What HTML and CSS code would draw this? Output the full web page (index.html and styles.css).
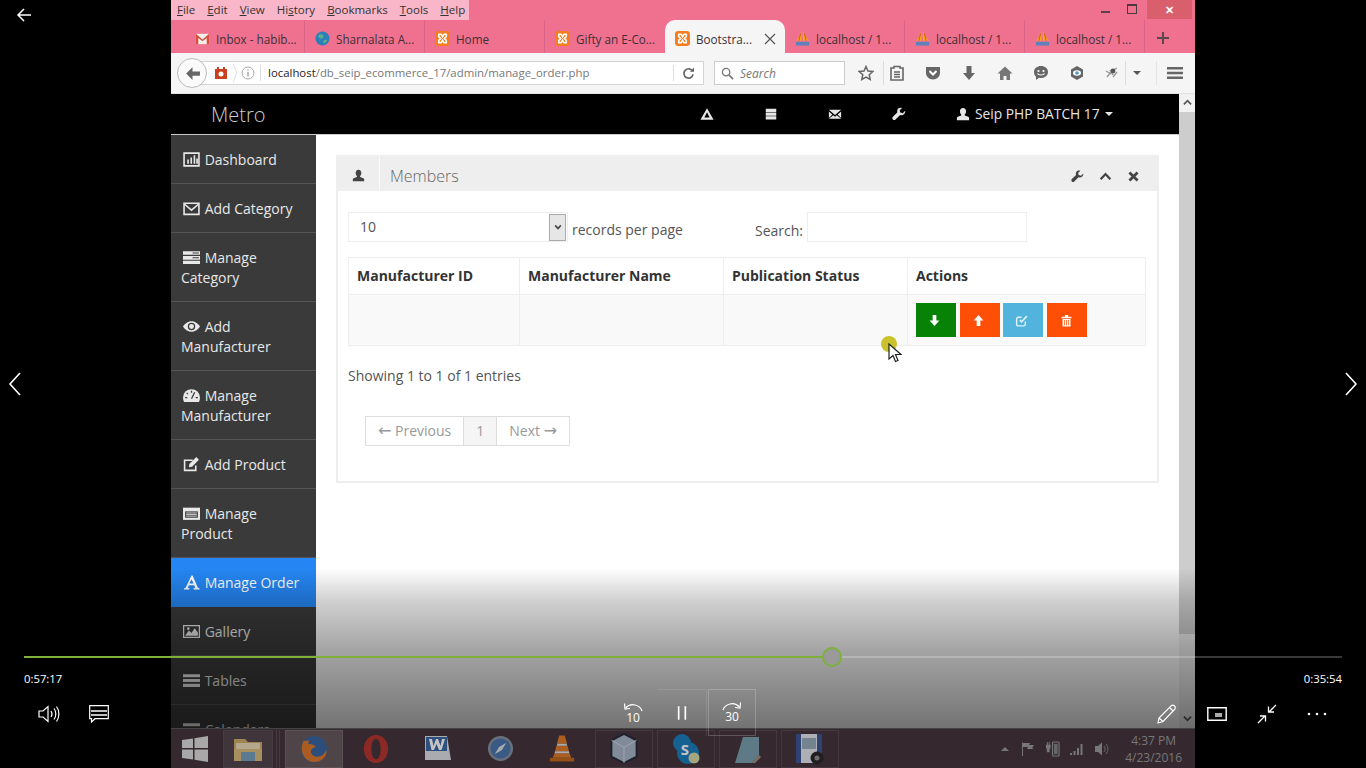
FILE: index.html
```html
<!DOCTYPE html>
<html lang="en">

<head>
    <meta charset="UTF-8">
    <title>Manage Order - Metro</title>
    <link rel="stylesheet" href="styles.css">
</head>

<body>
    <svg class="defs" width="0" height="0">
        <symbol id="xampp" viewBox="0 0 16 16">
            <rect x="0" y="0" width="16" height="16" rx="3.500" fill="#f57c1f" />
            <path d="M4 3.500h2.500L8 6l1.500-2.500H12V6l-2 2 2 2v2.500H9.500L8 10l-1.500 2.500H4V10l2-2-2-2z" fill="none" stroke="#fff" stroke-width="1.700" />
        </symbol>
        <symbol id="pma" viewBox="0 0 16 16">
            <path d="M1.500 10.500 7 .5v10zM8.500.5l6 10h-6z" fill="#f4a31c" />
            <path d="M6 2.500 4 10.500M10 2.500l2 8" stroke="#c9571a" stroke-width="1" />
            <rect x="1" y="11.500" width="14" height="4" fill="#5f82bd" />
        </symbol>
        <symbol id="wrench" viewBox="0 0 16 16">
            <path d="M15 4.200 12.300 7 9.500 6.300 8.800 3.600 11.500 1C9.400.3 7 1 6.200 3c-.4 1-.4 2 0 3L1 11.200c-.8.8-.8 2.200 0 3 .8.900 2.200.900 3 0L9.300 9c1 .4 2 .4 3 0 2-.8 3.200-3 2.700-4.800z" fill="currentColor" />
        </symbol>
        <symbol id="user" viewBox="0 0 16 16">
            <path d="M8 1c2.300 0 3.500 1.700 3.500 3.800 0 1.500-.7 3-1.500 3.800v1.200c2 .6 5 1.500 5 2.700V15H1v-2.500c0-1.200 3-2.100 5-2.700V8.600C5.200 7.800 4.500 6.300 4.500 4.800 4.500 2.700 5.700 1 8 1z" fill="currentColor" />
        </symbol>
        <symbol id="list" viewBox="0 0 16 16">
            <path d="M0 2h16v3H0zM0 6.500h16v3H0zM0 11h16v3H0z" fill="currentColor" />
        </symbol>
    </svg>

    <div class="screen">
        <div class="menubar">
            <nav class="menus">
                <span><u>F</u>ile</span>
                <span><u>E</u>dit</span>
                <span><u>V</u>iew</span>
                <span>Hi<u>s</u>tory</span>
                <span><u>B</u>ookmarks</span>
                <span><u>T</u>ools</span>
                <span><u>H</u>elp</span>
            </nav>
            <div class="window-btns">
                <span class="win-min"></span>
                <span class="win-restore"></span>
                <span class="win-close">&#10005;</span>
            </div>
        </div>

        <div class="tabs">
            <div class="tab">
                <svg class="fav" viewBox="0 0 16 16">
                    <path d="M1 3h14v11H1z" fill="#f3f0ec" />
                    <path d="M1 3l7 6 7-6v11h-2.500V7.500L8 11 3.500 7.500V14H1z" fill="#d9503f" />
                </svg>
                <span>Inbox - habib...</span>
            </div>
            <div class="tab">
                <svg class="fav" viewBox="0 0 16 16">
                    <circle cx="8" cy="8" r="7.500" fill="#2c7fb8" />
                    <path d="M4 4c2-1 4 0 5 1S8 8 6 8 3 6 4 4zM9 10c1-1 3-1 4 0-1 2-3 3-4 3z" fill="#5fae8b" />
                </svg>
                <span>Sharnalata A...</span>
            </div>
            <div class="tab">
                <svg class="fav">
                    <use href="#xampp" />
                </svg>
                <span>Home</span>
            </div>
            <div class="tab">
                <svg class="fav">
                    <use href="#xampp" />
                </svg>
                <span>Gifty an E-Co...</span>
            </div>
            <div class="tab tab-active">
                <svg class="fav">
                    <use href="#xampp" />
                </svg>
                <span>Bootstra...</span>
                <svg class="tab-close" viewBox="0 0 12 12">
                    <path d="M1 1l10 10M11 1 1 11" stroke="#555" stroke-width="1.200" />
                </svg>
            </div>
            <div class="tab">
                <svg class="fav">
                    <use href="#pma" />
                </svg>
                <span>localhost / 1...</span>
            </div>
            <div class="tab">
                <svg class="fav">
                    <use href="#pma" />
                </svg>
                <span>localhost / 1...</span>
            </div>
            <div class="tab">
                <svg class="fav">
                    <use href="#pma" />
                </svg>
                <span>localhost / 1...</span>
            </div>
            <svg class="tab-new" viewBox="0 0 14 14">
                <path d="M7 1v12M1 7h12" stroke="#5a4a50" stroke-width="2" />
            </svg>
        </div>

        <div class="toolbar">
            <div class="urlbar">
                <div class="back-btn">
                    <svg viewBox="0 0 16 16" width="17" height="17">
                        <path d="M8 2 2 8l6 6V10h7V6H8z" fill="#666" />
                    </svg>
                </div>
                <svg class="url-cam" viewBox="0 0 14 14">
                    <path d="M1 3h2V1h2v2h4V1h2v2h2v10H1z" fill="#c8401e" />
                    <circle cx="7" cy="8" r="2.500" fill="#fff" />
                </svg>
                <svg class="url-chevron" viewBox="0 0 6 24">
                    <path d="M1 2l4 10-4 10" fill="none" stroke="#ddd" />
                </svg>
                <svg class="url-info" viewBox="0 0 14 14">
                    <circle cx="7" cy="7" r="6" fill="none" stroke="#aaa" />
                    <path d="M7 6v4.500M7 3.500v1.200" stroke="#999" stroke-width="1.300" />
                </svg>
                <div class="url-text"><b>localhost</b>/db_seip_ecommerce_17/admin/manage_order.php</div>
                <div class="url-reload">
                    <svg viewBox="0 0 14 14" width="13" height="13">
                        <path d="M11.500 4.500A5 5 0 1 0 12 8" fill="none" stroke="#666" stroke-width="1.800" />
                        <path d="M8.500 5H13V.5z" fill="#666" />
                    </svg>
                </div>
            </div>
            <div class="searchbar">
                <svg viewBox="0 0 14 14" width="13" height="13">
                    <circle cx="5.500" cy="5.500" r="4" fill="none" stroke="#777" stroke-width="1.400" />
                    <path d="M8.500 8.500 13 13" stroke="#777" stroke-width="1.800" />
                </svg>
                <span>Search</span>
            </div>
            <div class="tool tool-star">
                <svg viewBox="0 0 16 16">
                    <path d="M8 1.500 10 6l4.800.5-3.600 3.200 1 4.800L8 12l-4.200 2.500 1-4.800L1.200 6.500 6 6z" fill="none" stroke="#666" stroke-width="1.500" />
                </svg>
            </div>
            <div class="tool tool-clip">
                <svg viewBox="0 0 16 16">
                    <path d="M2 3h3V1.500h6V3h3v12H2zM5 7h6M5 9.500h6M5 12h6" fill="none" stroke="#666" stroke-width="1.600" />
                </svg>
            </div>
            <div class="tool">
                <svg viewBox="0 0 16 16">
                    <path d="M1 2h14v6c0 3.500-3 6.500-7 6.500S1 11.500 1 8z" fill="#666" />
                    <path d="M4.500 6 8 9.500 11.500 6" fill="none" stroke="#fff" stroke-width="2" />
                </svg>
            </div>
            <div class="tool">
                <svg viewBox="0 0 16 16">
                    <path d="M5.500 1h5v7H14l-6 7-6-7h3.500z" fill="#666" />
                </svg>
            </div>
            <div class="tool">
                <svg viewBox="0 0 16 16">
                    <path d="M8 1.500 15.500 8.500H13V15H9.500v-4h-3v4H3V8.500H.5z" fill="#777" />
                </svg>
            </div>
            <div class="tool">
                <svg viewBox="0 0 16 16">
                    <path d="M8 1c4 0 7 2.500 7 6s-3 6-7 6c-.7 0-1.300-.1-2-.2L3 15v-3.200C1.800 10.700 1 9 1 7c0-3.500 3-6 7-6z" fill="#666" />
                    <circle cx="5.500" cy="6" r="1.100" fill="#fff" />
                    <circle cx="10.500" cy="6" r="1.100" fill="#fff" />
                    <path d="M4.500 8.500c1 2 6 2 7 0" fill="none" stroke="#fff" stroke-width="1.200" />
                </svg>
            </div>
            <div class="tool">
                <svg viewBox="0 0 16 16">
                    <path d="M8 1l6 3.500v7L8 15l-6-3.500v-7z" fill="#666" />
                    <ellipse cx="8" cy="8" rx="4" ry="2.700" fill="#fff" />
                    <circle cx="8" cy="8" r="1.800" fill="#4f9bd0" />
                </svg>
            </div>
            <div class="tool tool-addon">
                <svg viewBox="0 0 16 16">
                    <path d="M3 12 8 6l5-3M6 5l3 5M2 6l5 3M9 12l4-5" stroke="#999" stroke-width="1.400" fill="none" />
                    <circle cx="9" cy="6" r="2.400" fill="#555" />
                </svg>
            </div>
            <div class="tool tool-drop"><span></span></div>
            <div class="tool tool-menu">
                <svg viewBox="0 0 16 16">
                    <path d="M0 2h16v2.400H0zM0 6.800h16v2.400H0zM0 11.600h16V14H0z" fill="#666" />
                </svg>
            </div>
        </div>

        <div class="viewport">
            <div class="page">
                <header class="navbar">
                    <a class="brand">Metro</a>
                    <div class="nav-icons">
                        <svg viewBox="0 0 16 16">
                            <path d="M8 1.500 15.500 14.500H.5zM8 6 5 12h6z" fill="currentColor" fill-rule="evenodd" />
                        </svg>
                        <svg viewBox="0 0 16 16">
                            <path d="M2 2h12v3.600H2zM2 6.300h12v3.600H2zM2 10.600h12v3.600H2z" fill="currentColor" />
                        </svg>
                        <svg viewBox="0 0 16 16">
                            <path d="M1 3h14L8 9zM1 5l4 3.500L1 12.500zM15 5v7.500L11 8.500zM6 9.500l2 1.500 2-1.500 5 4H1z" fill="currentColor" />
                        </svg>
                        <svg viewBox="0 0 16 16">
                            <use href="#wrench" />
                        </svg>
                    </div>
                    <div class="nav-user">
                        <svg viewBox="0 0 16 16">
                            <use href="#user" />
                        </svg>
                        <span>Seip PHP BATCH 17</span>
                        <i class="caret"></i>
                    </div>
                </header>

                <div class="page-body">
                    <ul class="sidebar">
                        <li>
                            <svg class="side-icon" viewBox="0 0 16 16">
                                <path d="M1 2h14v12H1z" fill="none" stroke="currentColor" stroke-width="1.500" />
                                <path d="M4 8h1.500v4H4zM7 6h1.500v6H7zM10 4h1.500v8H10zM12.500 7H14v5h-1.500z" fill="currentColor" />
                            </svg>
                            Dashboard
                        </li>
                        <li>
                            <svg class="side-icon" viewBox="0 0 16 16">
                                <path d="M1 3h14v10.500H1z" fill="none" stroke="currentColor" stroke-width="1.500" />
                                <path d="M1.500 4 8 9.500 14.500 4" fill="none" stroke="currentColor" stroke-width="1.500" />
                            </svg>
                            Add Category
                        </li>
                        <li>
                            <svg class="side-icon" viewBox="0 0 16 16">
                                <path d="M0 2h16v3.500H0zM0 6.500h16V10H0zM0 11h16v3H0z" fill="currentColor" />
                                <path d="M9 3.800h6M9 8.200h6" stroke="#3a3a3a" stroke-width="1" />
                            </svg>
                            Manage Category
                        </li>
                        <li>
                            <svg class="side-icon" viewBox="0 0 16 16">
                                <path d="M8 3c3.500 0 6.500 2.500 8 5-1.500 2.500-4.500 5-8 5s-6.500-2.500-8-5c1.500-2.500 4.500-5 8-5zm0 1.500a3.500 3.500 0 1 0 0 7 3.500 3.500 0 0 0 0-7z" fill="currentColor" fill-rule="evenodd" />
                                <circle cx="8" cy="8" r="2.300" fill="currentColor" />
                            </svg>
                            Add Manufacturer
                        </li>
                        <li>
                            <svg class="side-icon" viewBox="0 0 16 16">
                                <path d="M8 2a8 8 0 0 1 8 8c0 1.500-.4 2.800-1 4H1c-.6-1.200-1-2.500-1-4a8 8 0 0 1 8-8z" fill="currentColor" />
                                <path d="M8 11 11 5M8 3.500v2M3.500 5.500l1.200 1.200M2 10h2M12 10h2" stroke="#3a3a3a" stroke-width="1.200" />
                            </svg>
                            Manage Manufacturer
                        </li>
                        <li>
                            <svg class="side-icon" viewBox="0 0 16 16">
                                <path d="M12 9v4.500H1.500V4H9" fill="none" stroke="currentColor" stroke-width="1.500" />
                                <path d="M6 7.500 12.500 1 15 3.500 8.500 10 5.500 10.500z" fill="currentColor" />
                            </svg>
                            Add Product
                        </li>
                        <li>
                            <svg class="side-icon" viewBox="0 0 16 16">
                                <path d="M0 2.500h16V14H0z" fill="currentColor" />
                                <path d="M2 6h12v6H2z" fill="#3a3a3a" />
                                <path d="M3 7.500h10M3 9h10M3 10.500h10" stroke="currentColor" stroke-width=".8" />
                            </svg>
                            Manage Product
                        </li>
                        <li class="active">
                            <svg class="side-icon" viewBox="0 0 16 16">
                                <path d="M8 1.500h1L14 13l1.500.5v1h-5.500v-1l1.500-.5-1-2.500H5.500l-1 2.500 1.500.5v1H1v-1L2.500 13zM8 5 6 9h4z" fill="currentColor" fill-rule="evenodd" />
                            </svg>
                            Manage Order
                        </li>
                        <li>
                            <svg class="side-icon" viewBox="0 0 16 16">
                                <path d="M.5 2.500h15v11H.5z" fill="none" stroke="currentColor" stroke-width="1.300" />
                                <path d="M2 12l3.500-5 2.500 2.500L11 5l3 4v3z" fill="currentColor" />
                                <circle cx="5" cy="5.300" r="1.200" fill="currentColor" />
                            </svg>
                            Gallery
                        </li>
                        <li>
                            <svg class="side-icon" viewBox="0 0 16 16">
                                <use href="#list" />
                            </svg>
                            Tables
                        </li>
                        <li>
                            <svg class="side-icon" viewBox="0 0 16 16">
                                <use href="#list" />
                            </svg>
                            Calendars
                        </li>
                    </ul>

                    <main class="content">
                        <section class="box">
                            <div class="box-header">
                                <span class="box-icon">
                                    <svg viewBox="0 0 16 16" width="13" height="13">
                                        <use href="#user" />
                                    </svg>
                                </span>
                                <h2>Members</h2>
                                <div class="box-tools">
                                    <svg viewBox="0 0 16 16">
                                        <use href="#wrench" />
                                    </svg>
                                    <svg viewBox="0 0 16 16">
                                        <path d="M2 11.500 8 5l6 6.500" fill="none" stroke="currentColor" stroke-width="2.800" />
                                    </svg>
                                    <svg viewBox="0 0 16 16">
                                        <path d="M3 3l10 10M13 3 3 13" stroke="currentColor" stroke-width="3.400" />
                                    </svg>
                                </div>
                            </div>
                            <div class="box-body">
                                <div class="table-controls">
                                    <div class="length-select">
                                        <span class="select-value">10</span>
                                        <span class="select-arrow">
                                            <svg viewBox="0 0 10 10" width="8" height="8">
                                                <path d="M1.500 3 5 7l3.500-4" fill="none" stroke="#444" stroke-width="2" />
                                            </svg>
                                        </span>
                                    </div>
                                    <span class="length-label">records per page</span>
                                    <label class="search-label">Search:</label>
                                    <div class="search-input"></div>
                                </div>
                                <table class="data-table">
                                    <thead>
                                        <tr>
                                            <th class="col-id">Manufacturer ID</th>
                                            <th class="col-name">Manufacturer Name</th>
                                            <th class="col-status">Publication Status</th>
                                            <th>Actions</th>
                                        </tr>
                                    </thead>
                                    <tbody>
                                        <tr>
                                            <td></td>
                                            <td></td>
                                            <td></td>
                                            <td class="actions">
                                                <a class="btn btn-green btn-nudge">
                                                    <svg viewBox="0 0 12 12">
                                                        <path d="M4.300 1h3.400v5H10.500L6 11 1.500 6h2.800z" fill="#fff" />
                                                    </svg>
                                                </a>
                                                <a class="btn btn-orange btn-nudge">
                                                    <svg viewBox="0 0 12 12">
                                                        <path d="M4.300 11h3.400V6H10.500L6 1 1.500 6h2.800z" fill="#fff" />
                                                    </svg>
                                                </a>
                                                <a class="btn btn-blue btn-nudge">
                                                    <svg viewBox="0 0 12 12">
                                                        <path d="M9.500 7v2.500a1.500 1.500 0 0 1-1.500 1.500H3A1.500 1.500 0 0 1 1.500 9.500V4.500A1.500 1.500 0 0 1 3 3h3" fill="none" stroke="#dff1fa" stroke-width="1.300" />
                                                        <path d="M4.500 5.500l1.500 1.700L11 2" fill="none" stroke="#dff1fa" stroke-width="1.500" />
                                                    </svg>
                                                </a>
                                                <a class="btn btn-orange">
                                                    <svg viewBox="0 0 12 12">
                                                        <path d="M1.500 2.500h3V1h3v1.500h3V4h-9zM2.300 4.700h7.400V11.500H2.300z" fill="#fff" />
                                                        <path d="M4.200 5.500v5M6 5.500v5M7.800 5.500v5" stroke="#ff4f06" stroke-width=".7" />
                                                    </svg>
                                                </a>
                                            </td>
                                        </tr>
                                    </tbody>
                                </table>
                                <div class="table-info">Showing 1 to 1 of 1 entries</div>
                                <ul class="pagination">
                                    <li class="page-prev"><span class="arrow">&larr;</span> Previous</li>
                                    <li class="page-current">1</li>
                                    <li class="page-next">Next <span class="arrow">&rarr;</span></li>
                                </ul>
                            </div>
                        </section>
                    </main>
                </div>
            </div>

            <div class="scrollbar">
                <svg viewBox="0 0 10 10" width="9" height="9">
                    <path d="M1 7 5 3l4 4" fill="none" stroke="#555" stroke-width="2" />
                </svg>
                <div class="scroll-thumb"></div>
                <svg viewBox="0 0 10 10" width="9" height="9">
                    <path d="M1 3l4 4 4-4" fill="none" stroke="#555" stroke-width="2" />
                </svg>
            </div>

            <div class="mouse">
                <span class="mouse-halo"></span>
                <svg viewBox="0 0 14 20" width="14" height="20">
                    <path d="M1 1v15l4-3.500 2.500 6 2.500-1-2.500-6H13z" fill="#fff" stroke="#222" stroke-width="1.200" />
                </svg>
            </div>

            <div class="scrim"></div>
        </div>

        <footer class="taskbar">
            <div class="task-start">
                <svg viewBox="0 0 26 26" width="26" height="26">
                    <path d="M0 4l11-1.500V12H0zM12.500 2.300 26 0v12H12.500zM0 13.500h11v10L0 22zM12.500 13.500H26V26l-13.500-2.300z" fill="#a8a8a8" />
                </svg>
            </div>
            <div class="task-item task-explorer">
                <svg viewBox="0 0 32 28" width="32" height="28">
                    <path d="M2 4h11l3 3h14v19H2z" fill="#c9a860" />
                    <path d="M4 8h24v6H4z" fill="#e4d9b0" />
                    <path d="M2 14h28v12H2z" fill="#d5b773" />
                    <path d="M9 17h14v9H9z" fill="#6b9ab5" />
                </svg>
            </div>
            <div class="task-item task-open">
                <svg viewBox="0 0 32 32" width="30" height="30">
                    <circle cx="16" cy="16" r="14" fill="#2a5c97" />
                    <path d="M5 7c-3 6-3 14 2 19 5 5 14 5 19 0 3-3 4-7 3-9-2 5-6 8-11 7-4-1-6-4-5-7 1-2 3-3 5-3-2-3-6-4-8-3 0-2 0-3 1-5-2 1-4 2-6 1z" fill="#d9701f" />
                </svg>
            </div>
            <div class="task-item">
                <svg viewBox="0 0 28 32" width="26" height="30">
                    <path d="M14 1C6 1 1 8 1 16s5 15 13 15 13-7 13-15S22 1 14 1zm0 4c3 0 5 5 5 11s-2 11-5 11-5-5-5-11S11 5 14 5z" fill="#b02a20" fill-rule="evenodd" />
                </svg>
            </div>
            <div class="task-item">
                <svg viewBox="0 0 28 28" width="28" height="28">
                    <path d="M1 1h22l4 24H1z" fill="#d8dde3" />
                    <path d="M2 2h21v14H2z" fill="#2a5f9e" />
                    <path d="M5 4h3l1.500 7L12 4h2l2.500 7L18 4h3l-3.500 11h-2.500L12.500 9 10 15H7.500z" fill="#fff" />
                </svg>
            </div>
            <div class="task-item">
                <svg viewBox="0 0 28 28" width="27" height="27">
                    <circle cx="14" cy="14" r="13" fill="#7f8c99" />
                    <circle cx="14" cy="14" r="10.500" fill="#3b6ea5" />
                    <path d="M20 8 15.500 15.500 8 20 12.500 12.500z" fill="#d5dde5" />
                </svg>
            </div>
            <div class="task-item">
                <svg viewBox="0 0 28 30" width="26" height="29">
                    <path d="M11 1h6l2.500 9h-11zM8 12h12l1.500 6h-15zM6 20h16l2 5H4z" fill="#d9731a" />
                    <path d="M9 10h10l.6 2H8.400zM6.500 18h15l.5 2H6z" fill="#ddd" />
                    <path d="M1 25h26v4H1z" fill="#b8600f" />
                </svg>
            </div>
            <div class="task-item task-box">
                <svg viewBox="0 0 28 32" width="28" height="31">
                    <path d="M14 1 27 7.500v17L14 31 1 24.500v-17z" fill="#9fb0c2" stroke="#141c2c" stroke-width="2" />
                    <path d="M14 15 27 7.500M14 15v16M14 15 1 7.500" stroke="#c8d3de" stroke-width="1" fill="none" />
                </svg>
            </div>
            <div class="task-item task-box">
                <svg viewBox="0 0 30 32" width="30" height="32">
                    <circle cx="11" cy="10" r="9" fill="#0a78b8" />
                    <circle cx="17" cy="20" r="11" fill="#0a78b8" />
                    <text x="14" y="22" class="skype-s">S</text>
                    <circle cx="23" cy="25" r="5.500" fill="#cfd6a0" />
                </svg>
            </div>
            <div class="task-item task-box">
                <svg viewBox="0 0 30 30" width="30" height="30">
                    <path d="M10 3h16v18l-7 8H2z" fill="#6e9aa8" />
                    <path d="M19 29l7-8 2 2-6 6z" fill="#9c8b73" />
                </svg>
            </div>
            <div class="task-item task-box">
                <svg viewBox="0 0 32 32" width="32" height="32">
                    <path d="M2 1h26v29H2z" fill="#dfe3ea" />
                    <path d="M2 1h5v29H2zM23 1h5v29h-5z" fill="#2c4d8f" />
                    <path d="M8 5h14v11H8z" fill="#8da7b5" />
                    <circle cx="23" cy="25" r="6.500" fill="#1a1a1a" />
                    <circle cx="23" cy="25" r="2.500" fill="#888" />
                </svg>
            </div>
            <div class="tray">
                <span class="tray-caret"></span>
                <svg viewBox="0 0 16 16" width="16" height="16">
                    <path d="M2 1.500h1V15H2zM3 2h7l-1 2h5l-2 3 2 1H7l1-2H3z" fill="#777" />
                </svg>
                <svg viewBox="0 0 16 18" width="15" height="17">
                    <path d="M1 5h1V2h1v3h1V2h1v3h1v4H5v4H2V9H1z" fill="#777" />
                    <rect x="8" y="2" width="7" height="15" rx="1" fill="none" stroke="#777" stroke-width="1.200" />
                    <rect x="9.500" y="4" width="4" height="11" fill="#666" />
                </svg>
                <svg viewBox="0 0 16 14" width="16" height="14">
                    <path d="M1 11h2v2H1zM4.500 9h2v4h-2zM8 6h2v7H8zM11.500 2h2v11h-2z" fill="#777" />
                </svg>
                <svg viewBox="0 0 16 16" width="16" height="16">
                    <path d="M1 5h3l4-3.500v13L4 11H1z" fill="#777" />
                    <path d="M10 5c1.500 1.500 1.500 4.500 0 6M12 3c2.500 2.500 2.500 7.500 0 10" fill="none" stroke="#666" stroke-width="1" />
                </svg>
                <div class="clock">
                    <div>4:37 PM</div>
                    <div>4/23/2016</div>
                </div>
            </div>
        </footer>
    </div>

    <!-- video player chrome, drawn over the recording -->
    <div class="player">
        <svg class="player-back" viewBox="0 0 16 16" width="16" height="16">
            <path d="M8 2 2 8l6 6M2 8h13" fill="none" stroke="#fff" stroke-width="1.500" />
        </svg>
        <div class="player-nav">
            <svg viewBox="0 0 14 26" width="14" height="26">
                <path d="M12 2 2 13l10 11" fill="none" stroke="#fff" stroke-width="1.600" />
            </svg>
            <svg viewBox="0 0 14 26" width="14" height="26">
                <path d="M2 2l10 11L2 24" fill="none" stroke="#fff" stroke-width="1.600" />
            </svg>
        </div>
        <div class="player-bottom">
            <div class="progress">
                <div class="progress-fill"></div>
                <div class="progress-knob"></div>
            </div>
            <div class="times">
                <span>0:57:17</span>
                <span>0:35:54</span>
            </div>
            <div class="controls">
                <div class="ctrl-group">
                    <div class="ctrl">
                        <svg viewBox="0 0 22 18" width="22" height="18">
                            <path d="M1 6h4l5-4.500v15L5 12H1z" fill="none" stroke="#fff" stroke-width="1.200" />
                            <path d="M13 6c1.200 1.800 1.200 4.200 0 6M16 3.500c2.400 3 2.400 8 0 11M18.500 1.500c3.200 4.200 3.200 10.800 0 15" fill="none" stroke="#fff" stroke-width="1.200" />
                        </svg>
                    </div>
                    <div class="ctrl">
                        <svg viewBox="0 0 20 18" width="20" height="18">
                            <path d="M.7.7h18.600v13H6L2.500 17v-3.300H.7z" fill="none" stroke="#fff" stroke-width="1.200" />
                            <path d="M2 6h16M2 10h16" stroke="#fff" stroke-width="1.300" />
                        </svg>
                    </div>
                </div>
                <div class="ctrl-group ctrl-center">
                    <div class="ctrl ctrl-skip">
                        <svg viewBox="0 0 20 10" width="20" height="10">
                            <path d="M19 9C17 3 8 0 2.500 6" fill="none" stroke="#fff" stroke-width="1.200" />
                            <path d="M1.500 1.500 2 7l5-.5" fill="none" stroke="#fff" stroke-width="1.200" />
                        </svg>
                        <span>10</span>
                    </div>
                    <div class="ctrl ctrl-pause">
                        <svg viewBox="0 0 12 16" width="10" height="16">
                            <path d="M2 0v16M10 0v16" stroke="#fff" stroke-width="2" />
                        </svg>
                    </div>
                    <div class="ctrl ctrl-skip ctrl-boxed">
                        <svg viewBox="0 0 20 10" width="20" height="10">
                            <path d="M1 9C3 3 12 0 17.500 6" fill="none" stroke="#fff" stroke-width="1.200" />
                            <path d="M18.500 1.500 18 7l-5-.5" fill="none" stroke="#fff" stroke-width="1.200" />
                        </svg>
                        <span>30</span>
                    </div>
                </div>
                <div class="ctrl-group ctrl-right">
                    <div class="ctrl">
                        <svg viewBox="0 0 20 20" width="20" height="20">
                            <path d="M1 19l1-5L14 2c1-1 2.500-1 3.500 0s1 2.500 0 3.500L6 17.500zM2 14l4 3.500M12.500 3.500l4 4" fill="none" stroke="#fff" stroke-width="1.200" />
                        </svg>
                    </div>
                    <div class="ctrl">
                        <svg viewBox="0 0 20 14" width="20" height="14">
                            <path d="M.8.8h18.400v12.400H.8z" fill="none" stroke="#fff" stroke-width="1.400" />
                            <path d="M8 6h7v4H8z" fill="#aaa" />
                        </svg>
                    </div>
                    <div class="ctrl">
                        <svg viewBox="0 0 20 20" width="20" height="20">
                            <path d="M1 19l7-7M3 12h5.500v5.500M19 1l-7 7M17 8h-5.500V2.500" fill="none" stroke="#fff" stroke-width="1.300" />
                        </svg>
                    </div>
                    <div class="ctrl">
                        <svg viewBox="0 0 20 4" width="20" height="4">
                            <circle cx="2" cy="2" r="1.300" fill="#fff" />
                            <circle cx="10" cy="2" r="1.300" fill="#fff" />
                            <circle cx="18" cy="2" r="1.300" fill="#fff" />
                        </svg>
                    </div>
                </div>
            </div>
        </div>
    </div>
</body>

</html>
```

FILE: styles.css
```css
* {
    box-sizing: border-box;
}

html,
body {
    height: 100%;
    margin: 0;
}

body {
    position: relative;
    display: flex;
    justify-content: center;
    overflow: hidden;
    background-color: #000;
    font-family: "Open Sans", Arial, sans-serif;
    color: #555;
}

.defs {
    position: absolute;
}

.screen {
    width: 1024px;
    height: 768px;
    display: flex;
    flex-direction: column;
    background-color: #f0718f;
}

/* browser chrome */
.menubar {
    height: 20px;
    display: flex;
    justify-content: space-between;
}

.menus {
    width: 298px;
    padding: 0 0 2px 6px;
    display: flex;
    gap: 12px;
    align-items: center;
    background-color: #f8b6c8;
    color: #333;
    font-size: 11.5px;
}

.window-btns {
    display: flex;
    align-items: flex-start;
    margin-right: 3px;
}

.win-min {
    width: 9px;
    height: 2px;
    margin: 11px 11px 0 0;
    background-color: #5a4248;
}

.win-restore {
    width: 10px;
    height: 10px;
    margin: 4px 10px 0 6px;
    border: 1px solid #4a3a40;
    border-top-width: 2px;
}

.win-close {
    width: 45px;
    height: 19px;
    background-color: #da5f6c;
    color: #fff;
    font-size: 11px;
    font-weight: bold;
    line-height: 19px;
    text-align: center;
}

.tabs {
    height: 33px;
    padding-left: 14px;
    display: flex;
    align-items: stretch;
}

.tab {
    width: 120px;
    padding: 4px 0 0 10px;
    display: flex;
    align-items: center;
    gap: 6px;
    border-right: 1px solid #d9668a;
    color: #3d3035;
    font-size: 11.700px;
    white-space: nowrap;
}

.tab:nth-child(4),
.tab-active {
    border-right: none;
}

.tab-active {
    background-color: #f5f5f5;
    border-radius: 10px 10px 0 0;
}

.fav {
    width: 15px;
    height: 15px;
    flex: none;
}

.tab-close {
    width: 12px;
    height: 12px;
    margin-left: 6px;
}

.tab-new {
    width: 14px;
    height: 14px;
    margin: 11px 0 0 11px;
}

.toolbar {
    height: 41px;
    display: flex;
    align-items: center;
    padding-left: 21px;
    background-color: #f5f5f5;
    border-bottom: 1px solid #e2e2e2;
}

.urlbar {
    position: relative;
    width: 512px;
    height: 24px;
    padding-left: 21px;
    display: flex;
    align-items: center;
    background-color: #fff;
    border: 1px solid #d5d5d5;
}

.back-btn {
    position: absolute;
    left: -16px;
    top: -4px;
    width: 30px;
    height: 30px;
    display: flex;
    align-items: center;
    justify-content: center;
    background-color: #fafafa;
    border: 1px solid #bbb;
    border-radius: 50%;
}

.url-cam {
    width: 14px;
    height: 14px;
}

.url-chevron {
    width: 6px;
    height: 22px;
    margin-left: 4px;
}

.url-info {
    width: 14px;
    height: 14px;
    margin-left: 3px;
}

.url-text {
    margin-left: 5px;
    padding-left: 7px;
    flex: 1;
    border-left: 1px solid #ddd;
    color: #777;
    font-size: 11.400px;
    line-height: 16px;
    white-space: nowrap;
}

.url-text b {
    color: #222;
    font-weight: normal;
}

.url-reload {
    width: 30px;
    height: 16px;
    display: flex;
    align-items: center;
    justify-content: center;
    border-left: 1px solid #ddd;
}

.searchbar {
    width: 131px;
    height: 24px;
    margin: 0 4px 0 10px;
    padding-left: 6px;
    display: flex;
    align-items: center;
    gap: 6px;
    background-color: #fff;
    border: 1px solid #ccc;
    color: #777;
    font-size: 12px;
    font-style: italic;
}

.tool {
    width: 36px;
    height: 24px;
    flex: none;
    display: flex;
    align-items: center;
    justify-content: center;
}

.tool svg {
    width: 16px;
    height: 16px;
}

.tool-star {
    border-right: 1px solid #ddd;
    width: 35px;
}

.tool-clip {
    width: 25px;
    margin-right: 6px;
}

.tool-addon {
    width: 34px;
}

.tool-drop {
    width: 22px;
    margin-left: -4px;
    border-left: 1px solid #ddd;
}

.tool-drop span {
    border: 4px solid transparent;
    border-top-color: #555;
    border-bottom: 0;
}

.tool-menu {
    width: 37px;
    margin-left: 9px;
    border-left: 1px solid #e4e4e4;
}

/* recorded page */
.viewport {
    position: relative;
    height: 634px;
    display: flex;
    overflow: hidden;
}

.page {
    flex: 1;
    display: flex;
    flex-direction: column;
    background-color: #fff;
}

.navbar {
    height: 41px;
    flex: none;
    display: flex;
    align-items: center;
    padding-bottom: 1px;
    background-color: #000;
    border-bottom: 1px solid #ccc;
    color: #e6e6e6;
}

.brand {
    margin-left: 40px;
    width: 489px;
    padding-top: 2px;
    color: #ccc;
    font-size: 20px;
    font-weight: 300;
}

.nav-icons {
    display: flex;
    gap: 50px;
}

.nav-icons svg {
    width: 14px;
    height: 14px;
}

.nav-user {
    margin-left: 50px;
    display: flex;
    align-items: center;
    gap: 5px;
    font-size: 13.800px;
}

.nav-user svg {
    width: 14px;
    height: 14px;
}

.caret {
    border: 4px solid transparent;
    border-top-color: #e6e6e6;
    border-bottom: 0;
}

.page-body {
    flex: 1;
    display: flex;
    min-height: 0;
}

.sidebar {
    width: 145px;
    flex: none;
    margin: 0;
    padding: 0;
    list-style: none;
    background-color: #3a3a3a;
    color: #e8e8e8;
    font-size: 14px;
    line-height: 20px;
}

.sidebar li {
    padding: 15px 10px 13px;
    border-bottom: 1px solid #555;
}

.sidebar li.active {
    background-color: #2586f3;
    border-bottom-color: #2586f3;
    color: #fff;
}

.side-icon {
    width: 17px;
    height: 17px;
    margin: 0 1px 0 2px;
    vertical-align: -3px;
}

.content {
    flex: 1;
    padding: 20px 20px 0;
}

.box {
    height: 328px;
    border: 2px solid #eee;
    border-top: none;
}

.box-header {
    height: 36px;
    display: flex;
    align-items: center;
    background-color: #eee;
    color: #444;
}

.box-icon {
    width: 42px;
    height: 36px;
    padding-top: 5px;
    display: flex;
    align-items: center;
    justify-content: center;
    border-right: 1px solid #fafafa;
}

.box-header h2 {
    margin: 0 0 0 10px;
    padding-top: 6px;
    flex: 1;
    color: #666;
    font-size: 16px;
    font-weight: 300;
}

.box-tools {
    display: flex;
    gap: 15px;
    margin: 6px 17px 0 0;
}

.box-tools svg {
    width: 13px;
    height: 13px;
}

.box-body {
    padding: 21px 10px 0;
}

.table-controls {
    height: 45px;
    display: flex;
    align-items: flex-start;
    font-size: 14px;
}

.length-select {
    width: 220px;
    height: 30px;
    display: flex;
    align-items: center;
    justify-content: space-between;
    padding: 0 1px 2px 11px;
    border: 1px solid #eee;
}

.select-value {
    color: #555;
}

.select-arrow {
    width: 17px;
    height: 27px;
    margin-top: 2px;
    display: flex;
    align-items: center;
    justify-content: center;
    background-color: #e6e6e6;
    border: 1px solid #aaa;
}

.length-label {
    margin: 8px 0 0 4px;
    width: 183px;
}

.search-label {
    margin-top: 9px;
    width: 52px;
}

.search-input {
    width: 220px;
    height: 30px;
    border: 1px solid #eee;
}

.data-table {
    width: 798px;
    border-collapse: collapse;
    table-layout: fixed;
    font-size: 14px;
}

.data-table th,
.data-table td {
    border: 1px solid #eee;
    padding: 0 8px;
}

.data-table th {
    height: 37px;
    padding-bottom: 2px;
    color: #333;
    font-weight: bold;
    text-align: left;
}

.data-table td {
    height: 51px;
    background-color: #f9f9f9;
}

.col-id {
    width: 171px;
}

.col-name {
    width: 204px;
}

.col-status {
    width: 184px;
}

.actions {
    white-space: nowrap;
}

.btn {
    width: 40px;
    height: 34px;
    display: inline-flex;
    align-items: center;
    justify-content: center;
    vertical-align: middle;
}

.btn svg {
    width: 13px;
    height: 13px;
}

.btn-nudge {
    padding-right: 3px;
}

.btn-green {
    background-color: #078207;
}

.btn-orange {
    background-color: #ff4f06;
}

.btn-blue {
    background-color: #52b3dc;
}

.table-info {
    margin-top: 20px;
    font-size: 14px;
    line-height: 20px;
}

.pagination {
    margin: 30px 0 0 17px;
    padding: 0;
    display: flex;
    list-style: none;
    color: #999;
    font-size: 14px;
}

.pagination li {
    height: 30px;
    padding: 0 12px;
    line-height: 28px;
    border: 1px solid #ddd;
    border-left: none;
}

.pagination .page-prev {
    border-left: 1px solid #ddd;
}

.pagination .page-current {
    background-color: #f5f5f5;
}

.arrow {
    font-family: "DejaVu Sans", sans-serif;
    font-size: 16px;
    line-height: 1;
}

.scrollbar {
    width: 16px;
    flex: none;
    display: flex;
    flex-direction: column;
    align-items: center;
    padding-top: 4px;
    background-color: #f1f1f1;
}

.scroll-thumb {
    width: 16px;
    height: 522px;
    margin-top: 5px;
    margin-bottom: 80px;
    background-color: #cdcdcd;
}

.mouse {
    position: absolute;
    left: 717px;
    top: 249px;
    width: 14px;
    height: 20px;
}

.mouse-halo {
    position: absolute;
    left: -7px;
    top: -7px;
    width: 16px;
    height: 16px;
    border-radius: 50%;
    background-color: #c9c22c;
}

.mouse svg {
    position: absolute;
    left: 0;
    top: 0;
}

.scrim {
    position: absolute;
    left: 0;
    right: 0;
    bottom: 0;
    height: 160px;
    background: linear-gradient(to bottom, rgba(0, 0, 0, 0) 0%, rgba(0, 0, 0, 0.18) 20%, rgba(0, 0, 0, 0.35) 50%, rgba(0, 0, 0, 0.55) 100%);
}

/* windows taskbar */
.taskbar {
    height: 40px;
    flex: none;
    display: flex;
    align-items: center;
    gap: 4px;
    background-color: #35292f;
    border-top: 1px solid #444;
}

.task-start {
    width: 48px;
    display: flex;
    justify-content: center;
}

.task-item {
    width: 58px;
    height: 38px;
    display: flex;
    align-items: center;
    justify-content: center;
    opacity: 0.72;
}

.task-explorer {
    width: 50px;
    margin-right: 8px;
    background-color: #453a40;
    border: 1px solid #4d4248;
    box-shadow: 3px 0 0 #35292f, 4px 0 0 #4d4248, 6px 0 0 #35292f, 7px 0 0 #4d4248;
}

.task-open {
    background-color: #5a5054;
    border: 1px solid #6c6266;
}

.task-box {
    border: 1px solid #4a3e44;
}

.skype-s {
    fill: #fff;
    font-size: 15px;
    font-weight: bold;
    text-anchor: middle;
}

.tray {
    margin-left: auto;
    padding-right: 13px;
    display: flex;
    align-items: center;
    gap: 9px;
}

.tray-caret {
    margin-right: 2px;
    border: 4px solid transparent;
    border-bottom-color: #777;
    border-top: 0;
}

.clock {
    margin-left: 6px;
    color: #777;
    font-size: 12px;
    line-height: 17px;
    text-align: center;
}

/* video player overlay */
.player {
    position: absolute;
    inset: 0;
    color: #fff;
}

.player-back {
    position: absolute;
    left: 16px;
    top: 7px;
}

.player-nav {
    position: absolute;
    left: 8px;
    right: 8px;
    top: 371px;
    display: flex;
    justify-content: space-between;
}

.player-bottom {
    position: absolute;
    left: 24px;
    right: 24px;
    top: 656px;
}

.progress {
    position: relative;
    height: 2px;
    background-color: rgba(255, 255, 255, 0.22);
}

.progress-fill {
    width: 61.300%;
    height: 2px;
    background-color: #7db13a;
}

.progress-knob {
    position: absolute;
    left: 61.300%;
    top: -9px;
    width: 20px;
    height: 20px;
    margin-left: -10px;
    border: 2px solid #7db13a;
    border-radius: 50%;
    background-color: #9a9a9a;
}

.times {
    margin-top: 13px;
    display: flex;
    justify-content: space-between;
    font-size: 11.300px;
    line-height: 16px;
}

.controls {
    margin-top: 2px;
    display: flex;
}

.ctrl-group {
    display: flex;
}

.ctrl-center {
    margin-left: 484px;
}

.ctrl-right {
    margin-left: auto;
}

.ctrl {
    width: 50px;
    height: 50px;
    display: flex;
    flex-direction: column;
    align-items: center;
    justify-content: center;
}

.ctrl-skip {
    padding-bottom: 2px;
    font-size: 12px;
    line-height: 12px;
}

.ctrl-boxed {
    width: 48px;
    height: 47px;
    margin: 0 1px 3px;
    border: 1px solid rgba(255, 255, 255, 0.2);
}

.ctrl-pause {
    width: 49px;
    height: 47px;
    border-right: 1px solid rgba(255, 255, 255, 0.1);
    border-top: 1px solid rgba(255, 255, 255, 0.1);
}
```
